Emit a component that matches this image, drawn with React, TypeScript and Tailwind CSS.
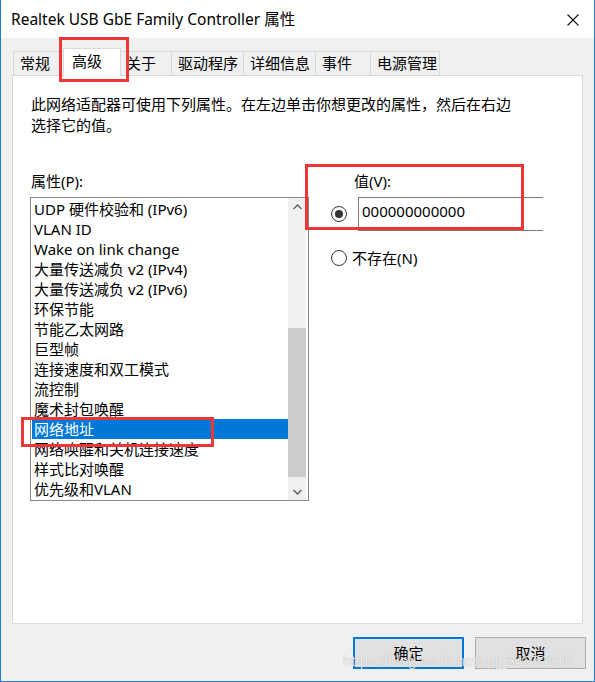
import React from "react";

const items = [
  "UDP 硬件校验和 (IPv6)",
  "VLAN ID",
  "Wake on link change",
  "大量传送减负 v2 (IPv4)",
  "大量传送减负 v2 (IPv6)",
  "环保节能",
  "节能乙太网路",
  "巨型帧",
  "连接速度和双工模式",
  "流控制",
  "魔术封包唤醒",
  "网络地址",
  "网络唤醒和关机连接速度",
  "样式比对唤醒",
  "优先级和VLAN",
];

const tabs: { label: string; w: string; sel?: boolean }[] = [
  { label: "常规", w: "w-[52px]" },
  { label: "高级", w: "w-[58px]", sel: true },
  { label: "关于", w: "w-[52px]" },
  { label: "驱动程序", w: "w-[72px]" },
  { label: "详细信息", w: "w-[72px]" },
  { label: "事件", w: "w-[55px]" },
  { label: "电源管理", w: "w-[70px]" },
];

function Radio({ checked }: { checked?: boolean }) {
  return (
    <div className="w-[16px] h-[16px] rounded-full border border-[#333333] bg-white flex items-center justify-center shrink-0">
      {checked && <div className="w-[8px] h-[8px] rounded-full bg-[#333333]" />}
    </div>
  );
}

export default function App() {
  return (
    <div className="relative w-[595px] h-[682px] bg-[#f0f0f0] border-x border-b border-[#1a7fd4] flex flex-col text-black text-[15px] font-['Noto_Sans','Noto_Sans_CJK_SC',sans-serif]">
      {/* title bar */}
      <div className="h-[38px] bg-white flex items-center justify-between pl-[10px] pr-[15px] shrink-0">
        <span className="text-[15.5px] leading-[20px]">Realtek USB GbE Family Controller 属性</span>
        <svg width="12" height="12" viewBox="0 0 12 12" className="mt-[1px]">
          <path d="M0.5 0.5 L11.5 11.5 M11.5 0.5 L0.5 11.5" stroke="#111" strokeWidth="1.1" fill="none" />
        </svg>
      </div>

      {/* tabs */}
      <div className="flex items-end h-[27px] mt-[10px] pl-[12px] relative z-10 shrink-0">
        {tabs.map((t, i) =>
          t.sel ? (
            <div
              key={i}
              className={`${t.w} h-[28px] -mx-[2px] -mb-[1px] bg-white border-t border-x border-[#d9d9d9] pl-[8px] leading-[25px] relative z-10`}
            >
              {t.label}
            </div>
          ) : (
            <div
              key={i}
              className={`${t.w} h-[24px] bg-[#f0f0f0] border-t border-l border-[#d9d9d9] pl-[6px] leading-[22px] ${
                i === tabs.length - 1 ? "border-r" : ""
              }`}
            >
              {t.label}
            </div>
          )
        )}
      </div>

      {/* panel */}
      <div className="ml-[11px] w-[571px] h-[549px] bg-white border border-[#d9d9d9] pt-[18px] pl-[17px] shrink-0">
        <p className="pl-[1px] leading-[21px]">
          此网络适配器可使用下列属性。在左边单击你想更改的属性，然后在右边
          <br />
          选择它的值。
        </p>

        <div className="flex mt-[35px]">
          {/* left column */}
          <div className="w-[279px] flex flex-col">
            <div className="h-[20px] leading-[20px] pl-[1px]">属性(P):</div>
            <div className="mt-[6px] h-[304px] border border-[#828790] flex">
              <div className="flex-1 pt-[1px]">
                {items.map((it, i) => (
                  <div
                    key={i}
                    className={`h-[20px] leading-[20px] pl-[2px] ml-[1px] whitespace-nowrap ${
                      i === 11 ? "bg-[#0078d7] text-white" : ""
                    }`}
                  >
                    {it}
                  </div>
                ))}
              </div>
              <div className="w-[18px] bg-[#f0f0f0] flex flex-col">
                <div className="h-[17px] flex items-center justify-center">
                  <svg width="9" height="6" viewBox="0 0 9 6">
                    <path d="M0.5 5 L4.5 1 L8.5 5" stroke="#606060" strokeWidth="1.4" fill="none" />
                  </svg>
                </div>
                <div className="h-[113px]" />
                <div className="h-[149px] bg-[#cdcdcd]" />
                <div className="flex-1" />
                <div className="h-[17px] flex items-center justify-center">
                  <svg width="9" height="6" viewBox="0 0 9 6">
                    <path d="M0.5 1 L4.5 5 L8.5 1" stroke="#606060" strokeWidth="1.4" fill="none" />
                  </svg>
                </div>
              </div>
              <div className="w-[2px]" />
            </div>
          </div>

          {/* right column */}
          <div className="flex-1 flex flex-col">
            <div className="h-[20px] leading-[20px] pl-[45px]">值(V):</div>
            <div className="mt-[6px] flex items-center pl-[22px]">
              <Radio checked />
              <div className="ml-[11px] w-[185px] h-[34px] border-y border-l border-[#7a7a7a] pl-[3px] pt-[3px] leading-[20px]">
                000000000000
              </div>
            </div>
            <div className="mt-[17px] h-[20px] flex items-center pl-[22px]">
              <Radio />
              <span className="ml-[5px] leading-[20px]">不存在(N)</span>
            </div>
          </div>
        </div>
      </div>

      {/* buttons */}
      <div className="flex justify-end gap-[11px] pr-[8px] mt-[13px]">
        <button className="w-[111px] h-[32px] bg-[#e1e1e1] border-2 border-[#0078d7] leading-[27px]">确定</button>
        <button className="w-[111px] h-[32px] bg-[#e1e1e1] border border-[#adadad] leading-[29px]">取消</button>
      </div>

      {/* watermark */}
      <div className="absolute left-[342px] top-[651px] text-[15px] leading-[20px] text-white/80 whitespace-nowrap font-['Liberation_Sans',sans-serif] [text-shadow:0_0_1px_rgba(0,0,0,0.35)]">
        https://blog.csdn.net/qq_34272900
      </div>

      {/* red annotation boxes */}
      <div className="absolute left-[58px] top-[37px] w-[70px] h-[45px] border-[3px] border-[#ee3636] z-20" />
      <div className="absolute left-[304px] top-[164px] w-[219px] h-[66px] border-[3px] border-[#ee3636] z-20" />
      <div className="absolute left-[20px] top-[417px] w-[193px] h-[30px] border-[3px] border-[#ee3636] z-20" />
    </div>
  );
}
